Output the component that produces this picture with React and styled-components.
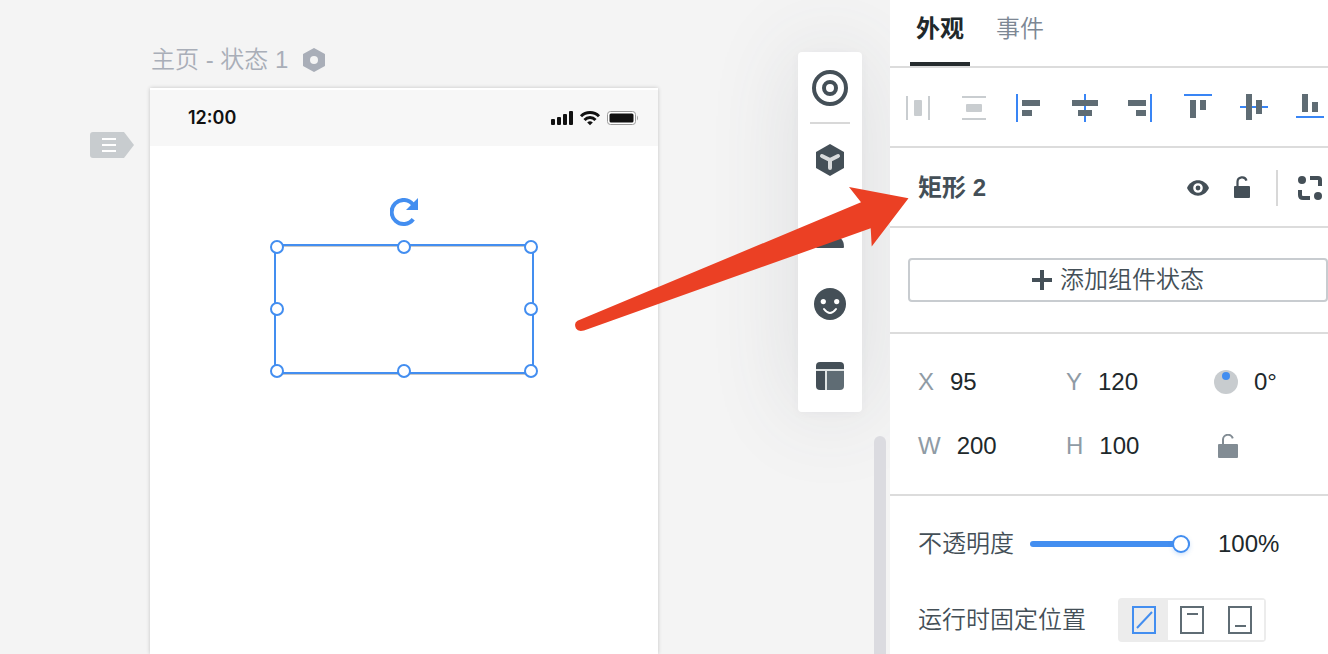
import { useState } from "react";
import styled, { createGlobalStyle } from "styled-components";

const GlobalStyle = createGlobalStyle`
  * {
    box-sizing: border-box;
  }

  body {
    margin: 0;
    overflow: hidden;
    font-family: "Liberation Sans", "Noto Sans CJK SC", sans-serif;
    font-size: 24px;
    line-height: 32px;
    color: #444f57;
  }

  button,
  input {
    font: inherit;
    color: inherit;
  }

  svg {
    display: block;
    flex: none;
  }
`;

const Container = styled.div`
  display: flex;
  height: 100vh;
  overflow: hidden;
`;

const Canvas = styled.main`
  flex: 1;
  position: relative;
  display: grid;
  grid-template-columns: 60px 508px;
  grid-template-rows: 40px 1fr;
  row-gap: 8px;
  padding: 40px 0 0 90px;
  background-color: #f4f4f4;
`;

const PageTitle = styled.h1`
  grid-column: 2;
  display: flex;
  align-items: center;
  gap: 14px;
  margin: 0;
  padding-left: 1px;
  font-size: 24px;
  font-weight: 350;
  line-height: 40px;
  color: #a9aeb8;
`;

const Marker = styled.button`
  align-self: start;
  justify-self: start;
  margin: 44px 0 0;
  padding: 0;
  border: none;
  background: none;
`;

const Artboard = styled.section`
  position: relative;
  background-color: white;
  box-shadow: 0 0 4px rgba(0, 0, 0, 0.2);
`;

const StatusBar = styled.div`
  display: flex;
  align-items: center;
  justify-content: space-between;
  height: 58px;
  padding: 0 20px 0 38px;
  border-top: 2px solid white;
  background-color: #f7f7f7;
`;

const Clock = styled.span`
  font-family: Inter, sans-serif;
  font-size: 18px;
  font-weight: 600;
  color: #111;
`;

const Selection = styled.div`
  position: absolute;
  left: 124px;
  top: 156px;
  width: 260px;
  height: 130px;
  border: 2px solid #438ef0;
  box-shadow: 0 1px 0 #c8c8c8, inset 0 1px 0 #c8c8c8;
`;

const Handles = styled.div`
  position: absolute;
  inset: -6px;
  display: grid;
  grid-template-columns: repeat(3, 14px);
  grid-template-rows: repeat(3, 14px);
  justify-content: space-between;
  align-content: space-between;
`;

const Handle = styled.button`
  grid-column: ${(props) => props.$column};
  grid-row: ${(props) => props.$row};
  padding: 0;
  border: 2px solid #438ef0;
  border-radius: 50%;
  background-color: white;
`;

const Rotate = styled.button`
  position: absolute;
  left: 114px;
  bottom: 146px;
  padding: 0;
  border: none;
  background: none;
`;

const Toolbar = styled.nav`
  position: absolute;
  top: 52px;
  right: 28px;
  display: flex;
  flex-direction: column;
  width: 64px;
  border-radius: 4px;
  background-color: white;
  box-shadow: 0 2px 10px rgba(70, 80, 90, 0.04),
    0 0 90px rgba(70, 75, 90, 0.14);
`;

const Tool = styled.button`
  display: flex;
  align-items: center;
  justify-content: center;
  height: 72px;
  padding: 0;
  border: none;
  background: none;
`;

const ToolDivider = styled.hr`
  width: 40px;
  margin: -2px auto 0;
  border: none;
  border-top: 2px solid #d8d8d8;
`;

const ScrollThumb = styled.div`
  position: absolute;
  top: 436px;
  right: 4px;
  bottom: -12px;
  width: 12px;
  border-radius: 6px;
  background-color: #dbdbe0;
`;

const Arrow = styled.svg`
  position: absolute;
  top: 186px;
  right: -20px;
  z-index: 2;
  pointer-events: none;
`;

const Panel = styled.aside`
  flex: 0 0 438px;
  position: relative;
  min-width: 0;
  background-color: white;
`;

const Tabs = styled.div`
  display: flex;
  gap: 20px;
  padding: 0 20px;
  border-bottom: 2px solid #dcdcdc;
`;

const Tab = styled.button`
  padding: 0 6px 4px;
  border: none;
  border-bottom: 4px solid ${(props) => (props.$active ? "#262c2e" : "transparent")};
  background: none;
  line-height: 58px;
  font-weight: ${(props) => (props.$active ? 700 : 350)};
  color: ${(props) => (props.$active ? "#20282b" : "#7d8794")};
`;

const AlignRow = styled.div`
  display: flex;
  gap: 28px;
  padding: 26px 0 24px 14px;
  border-bottom: 2px solid #dcdcdc;
`;

const IconButton = styled.button`
  display: flex;
  justify-content: center;
  padding: 0;
  border: none;
  background: none;
`;

const NameRow = styled.div`
  display: flex;
  align-items: center;
  height: 80px;
  padding: 2px 6px 0 28px;
  border-bottom: 2px solid #dcdcdc;
`;

const Name = styled.h2`
  flex: 1;
  margin: 0;
  font-size: 24px;
  font-weight: 700;
`;

const Actions = styled.div`
  display: flex;
  align-items: center;
  gap: 20px;
`;

const Separator = styled.span`
  width: 2px;
  height: 36px;
  margin-left: 2px;
  background-color: #d8d8d8;
`;

const StateSection = styled.div`
  padding: 30px 0 30px 18px;
  border-bottom: 2px solid #dcdcdc;
`;

const AddButton = styled.button`
  display: flex;
  align-items: center;
  justify-content: center;
  gap: 8px;
  width: 100%;
  height: 44px;
  border: 2px solid #c8ccd0;
  border-radius: 4px;
  background-color: white;
  font-weight: 350;
`;

const Geometry = styled.div`
  display: grid;
  grid-template-columns: 148px 148px 1fr;
  grid-auto-rows: 40px;
  row-gap: 24px;
  padding: 28px 0 28px 28px;
  border-bottom: 2px solid #dcdcdc;
`;

const Field = styled.label`
  display: flex;
  align-items: center;
  gap: 16px;
  color: #8f9ba5;
`;

const Value = styled.input`
  width: 72px;
  padding: 0;
  border: none;
  outline: none;
  background: none;
  color: #20282b;
`;

const LockRatio = styled(IconButton)`
  align-items: center;
  justify-content: flex-start;
`;

const Settings = styled.div`
  display: flex;
  flex-direction: column;
  gap: 34px;
  padding: 28px 0 0 28px;
`;

const SettingRow = styled.div`
  display: flex;
  align-items: center;
  height: ${(props) => props.$height};
`;

const SettingLabel = styled.label`
  font-weight: 350;
`;

const Slider = styled.input`
  appearance: none;
  width: 160px;
  height: 18px;
  margin: 0 28px 0 16px;
  background: none;

  &::-webkit-slider-runnable-track {
    height: 6px;
    border-radius: 3px;
    background-color: #438ef0;
  }

  &::-webkit-slider-thumb {
    appearance: none;
    width: 18px;
    height: 18px;
    margin-top: -6px;
    border: 2px solid #438ef0;
    border-radius: 50%;
    background-color: white;
    box-shadow: 0 2px 4px rgba(67, 142, 240, 0.25);
  }
`;

const Segmented = styled.div`
  display: flex;
  margin-left: 32px;
  border: 2px solid #ececec;
  border-radius: 4px;
`;

const Segment = styled.button`
  display: flex;
  align-items: center;
  justify-content: center;
  width: 48px;
  height: 40px;
  padding: 0;
  border: none;
  background-color: ${(props) => (props.$active ? "#ececec" : "white")};
  color: ${(props) => (props.$active ? "#438ef0" : "#5f6c74")};
`;

const handles = [
  [1, 1],
  [2, 1],
  [3, 1],
  [1, 2],
  [3, 2],
  [1, 3],
  [2, 3],
  [3, 3],
];

// line is the guide, bars are [x, y, width, height]
const alignments = [
  { label: "左对齐", line: [0, 0, 2, 28], bars: [[6, 6, 18, 6], [6, 16, 10, 6]] },
  { label: "水平居中", line: [12, 0, 2, 28], bars: [[0, 6, 26, 6], [6, 16, 14, 6]] },
  { label: "右对齐", line: [22, 0, 2, 28], bars: [[0, 6, 18, 6], [8, 16, 10, 6]] },
  { label: "顶对齐", line: [0, 0, 28, 2], bars: [[6, 6, 6, 18], [16, 6, 6, 10]] },
  { label: "垂直居中", line: [0, 12, 28, 2], bars: [[6, 0, 6, 26], [16, 6, 6, 14]] },
  { label: "底对齐", line: [0, 22, 28, 2], bars: [[6, 0, 6, 18], [16, 8, 6, 10]] },
];

const segments = [
  { label: "不固定", path: "M5 22L20 6" },
  { label: "固定在顶部", path: "M7 8h11" },
  { label: "固定在底部", path: "M7 20h11" },
];

function Rect({ box, fill }) {
  const [x, y, width, height] = box;
  return <rect x={x} y={y} width={width} height={height} fill={fill} />;
}

function StatusIcons() {
  return (
    <svg width="88" height="16" viewBox="0 0 88 16" fill="#111">
      <rect x="1" y="9" width="4" height="6" rx="1" />
      <rect x="7" y="7" width="4" height="8" rx="1" />
      <rect x="13" y="4" width="4" height="11" rx="1" />
      <rect x="19" y="1" width="4" height="14" rx="1" />
      <g fill="none" stroke="#111" strokeWidth="3">
        <path d="M31 6.2C36 1.2 44 1.2 49 6.2" />
        <path d="M34.5 10C37.5 6.8 42.5 6.8 45.5 10" />
      </g>
      <path d="M37.2 12.4q2.8-2.4 5.6 0L40 15.2z" />
      <rect x="57.5" y="1.5" width="28" height="13" rx="3" fill="white" stroke="#999" />
      <rect x="59.500" y="3.500" width="24" height="9" rx="1.500" />
      <path d="M87 5.5q2.4 2.5 0 5z" fill="#aaa" />
    </svg>
  );
}

function TagIcon() {
  return (
    <svg width="44" height="26" viewBox="0 0 44 26">
      <path d="M3 0h31l10 13-10 13H3q-3 0-3-3V3q0-3 3-3z" fill="#c8cccf" />
      <path d="M12 7h14M12 13h14M12 19h14" stroke="white" strokeWidth="2" />
    </svg>
  );
}

function LockIcon({ size, color, stroke }) {
  return (
    <svg width={size} height={size} viewBox="0 0 24 24">
      <rect x="4" y="10" width="16" height="12" rx="1" fill={color} />
      <path
        d="M7.5 11V6a4.6 4.6 0 0 1 9-1.4"
        fill="none"
        stroke={color}
        strokeWidth={stroke}
      />
    </svg>
  );
}

function Inspector() {
  const [fixed, setFixed] = useState(0);
  const [opacity, setOpacity] = useState(100);

  return (
    <Panel>
      <Tabs>
        <Tab $active>外观</Tab>
        <Tab>事件</Tab>
      </Tabs>

      <AlignRow>
        <IconButton aria-label="水平分布" disabled>
          <svg width="28" height="28" fill="#c9cdd0">
            <path d="M2 2h2v24H2zM24 2h2v24h-2z" />
            <rect x="10" y="6" width="8" height="16" rx="1" />
          </svg>
        </IconButton>
        <IconButton aria-label="垂直分布" disabled>
          <svg width="28" height="28" fill="#c9cdd0">
            <path d="M2 2h24v2H2zM2 24h24v2H2z" />
            <rect x="6" y="10" width="16" height="8" rx="1" />
          </svg>
        </IconButton>
        {alignments.map((item) => (
          <IconButton key={item.label} aria-label={item.label}>
            <svg width="28" height="28">
              <Rect box={item.line} fill="#3985f5" />
              {item.bars.map((bar) => (
                <Rect key={bar.join()} box={bar} fill="#5f6c74" />
              ))}
            </svg>
          </IconButton>
        ))}
      </AlignRow>

      <NameRow>
        <Name>矩形 2</Name>
        <Actions>
          <IconButton aria-label="显示">
            <svg width="24" height="24" viewBox="0 0 24 24">
              <path
                d="M1 12C5.5 1.8 18.5 1.8 23 12 18.5 22.2 5.5 22.2 1 12z"
                fill="#444f57"
              />
              <circle cx="12" cy="12" r="3.6" fill="#444f57" stroke="white" strokeWidth="2.4" />
            </svg>
          </IconButton>
          <IconButton aria-label="锁定">
            <LockIcon size={24} color="#444f57" stroke={2.2} />
          </IconButton>
          <Separator />
          <IconButton aria-label="转为组件">
            <svg width="24" height="24" viewBox="0 0 24 24" fill="#444f57">
              <circle cx="4" cy="4" r="4" />
              <circle cx="20" cy="20" r="4" />
              <path
                d="M12 2h8q2 0 2 2v6M2 14v5q0 3 3 3h7"
                fill="none"
                stroke="#444f57"
                strokeWidth="4"
              />
            </svg>
          </IconButton>
        </Actions>
      </NameRow>

      <StateSection>
        <AddButton>
          <svg width="20" height="20">
            <path d="M10 0v20M0 10h20" stroke="#444f57" strokeWidth="4" />
          </svg>
          添加组件状态
        </AddButton>
      </StateSection>

      <Geometry>
        <Field>
          X
          <Value defaultValue="95" />
        </Field>
        <Field>
          Y
          <Value defaultValue="120" />
        </Field>
        <Field>
          <svg width="24" height="24">
            <circle cx="12" cy="12" r="12" fill="#c8cccf" />
            <circle cx="12" cy="6" r="4" fill="#438ef0" />
          </svg>
          <Value aria-label="旋转" defaultValue="0°" />
        </Field>
        <Field>
          W
          <Value defaultValue="200" />
        </Field>
        <Field>
          H
          <Value defaultValue="100" />
        </Field>
        <LockRatio aria-label="锁定比例">
          <svg width="28" height="24" viewBox="0 0 28 24">
            <rect x="4" y="10" width="20" height="14" rx="1" fill="#828c94" />
            <path d="M9 11V6a5 5 0 0 1 9.8-1.6" fill="none" stroke="#828c94" strokeWidth="2" />
          </svg>
        </LockRatio>
      </Geometry>

      <Settings>
        <SettingRow $height="40px">
          <SettingLabel htmlFor="opacity">不透明度</SettingLabel>
          <Slider
            id="opacity"
            type="range"
            value={opacity}
            onChange={(e) => setOpacity(e.target.value)}
          />
          <Value aria-label="不透明度" value={`${opacity}%`} readOnly />
        </SettingRow>
        <SettingRow $height="44px">
          <SettingLabel as="span" id="fixed-label">
            运行时固定位置
          </SettingLabel>
          <Segmented role="group" aria-labelledby="fixed-label">
            {segments.map((segment, index) => (
              <Segment
                key={segment.label}
                aria-label={segment.label}
                aria-pressed={fixed === index}
                $active={fixed === index}
                onClick={() => setFixed(index)}
              >
                <svg width="24" height="28" fill="none" stroke="currentColor" strokeWidth="2">
                  <rect x="1" y="1" width="22" height="26" />
                  <path d={segment.path} />
                </svg>
              </Segment>
            ))}
          </Segmented>
        </SettingRow>
      </Settings>
    </Panel>
  );
}

function App() {
  return (
    <Container>
      <GlobalStyle />

      <Canvas>
        <PageTitle>
          主页 - 状态 1
          <svg width="24" height="24" viewBox="0 0 24 24">
            <path
              d="M12 1l10 5.6v10.8L12 23 2 17.4V6.6z"
              fill="#a9aeb8"
              stroke="#a9aeb8"
              strokeWidth="2"
              strokeLinejoin="round"
            />
            <circle cx="12" cy="12" r="4" fill="#f4f4f4" />
          </svg>
        </PageTitle>

        <Marker aria-label="页面菜单">
          <TagIcon />
        </Marker>

        <Artboard>
          <StatusBar>
            <Clock>12:00</Clock>
            <StatusIcons />
          </StatusBar>

          <Selection>
            <Rotate aria-label="旋转">
              <svg width="28" height="28" viewBox="0 0 28 28">
                <path
                  d="M22.8 6.2A12 12 0 1 0 23.2 21.2"
                  fill="none"
                  stroke="#438ef0"
                  strokeWidth="4"
                />
                <path d="M28 0v12H16z" fill="#438ef0" />
              </svg>
            </Rotate>
            <Handles>
              {handles.map(([column, row]) => (
                <Handle
                  key={`${column}-${row}`}
                  aria-label="调整大小"
                  $column={column}
                  $row={row}
                />
              ))}
            </Handles>
          </Selection>
        </Artboard>

        <Toolbar>
          <Tool aria-label="组件">
            <svg width="36" height="36" fill="none" stroke="#444f57" strokeWidth="4">
              <circle cx="18" cy="18" r="16" />
              <circle cx="18" cy="18" r="6" />
            </svg>
          </Tool>
          <ToolDivider />
          <Tool aria-label="素材">
            <svg width="28" height="32" viewBox="0 0 28 32">
              <path d="M14 0l14 8v16l-14 8-14-8V8z" fill="#444f57" />
              <path
                d="M6 12l8 4 8-4M14 16v8"
                fill="none"
                stroke="#d8dadb"
                strokeWidth="4"
                strokeLinecap="round"
              />
            </svg>
          </Tool>
          <Tool aria-label="我的">
            <svg width="28" height="32" viewBox="0 0 28 32" fill="#444f57">
              <circle cx="14" cy="10" r="6" />
              <path d="M0 31q0-12 14-12t14 12q0 1-1 1H1q-1 0-1-1z" />
            </svg>
          </Tool>
          <Tool aria-label="图标">
            <svg width="32" height="32">
              <circle cx="16" cy="16" r="16" fill="#444f57" />
              <circle cx="9.3" cy="13.6" r="2.6" fill="white" />
              <circle cx="22.7" cy="13.6" r="2.6" fill="white" />
              <path
                d="M10 21q6 8 12 0"
                fill="none"
                stroke="white"
                strokeWidth="2"
                strokeLinecap="round"
              />
            </svg>
          </Tool>
          <Tool aria-label="母版">
            <svg width="28" height="28">
              <path d="M0 7V4q0-4 4-4h20q4 0 4 4v3z" fill="#444f57" />
              <path d="M0 9h9v19H4q-4 0-4-4z" fill="#444f57" />
              <path d="M11 9h17v15q0 4-4 4H11z" fill="#5f6c74" />
              <path d="M0 8h28M10 9v19" stroke="#dfe3e3" strokeWidth="2" />
            </svg>
          </Tool>
        </Toolbar>

        <ScrollThumb />

        <Arrow width="336" height="148" viewBox="574 186 336 148">
          <path
            d="M849 187l59.500 11.300L871.700 246.500 870.700 228.300 584 330.500Q578 332 576 328.500 573.500 323 577.500 320.700L861 202.300z"
            fill="#eb4024"
          />
        </Arrow>
      </Canvas>

      <Inspector />
    </Container>
  );
}

export default App;
